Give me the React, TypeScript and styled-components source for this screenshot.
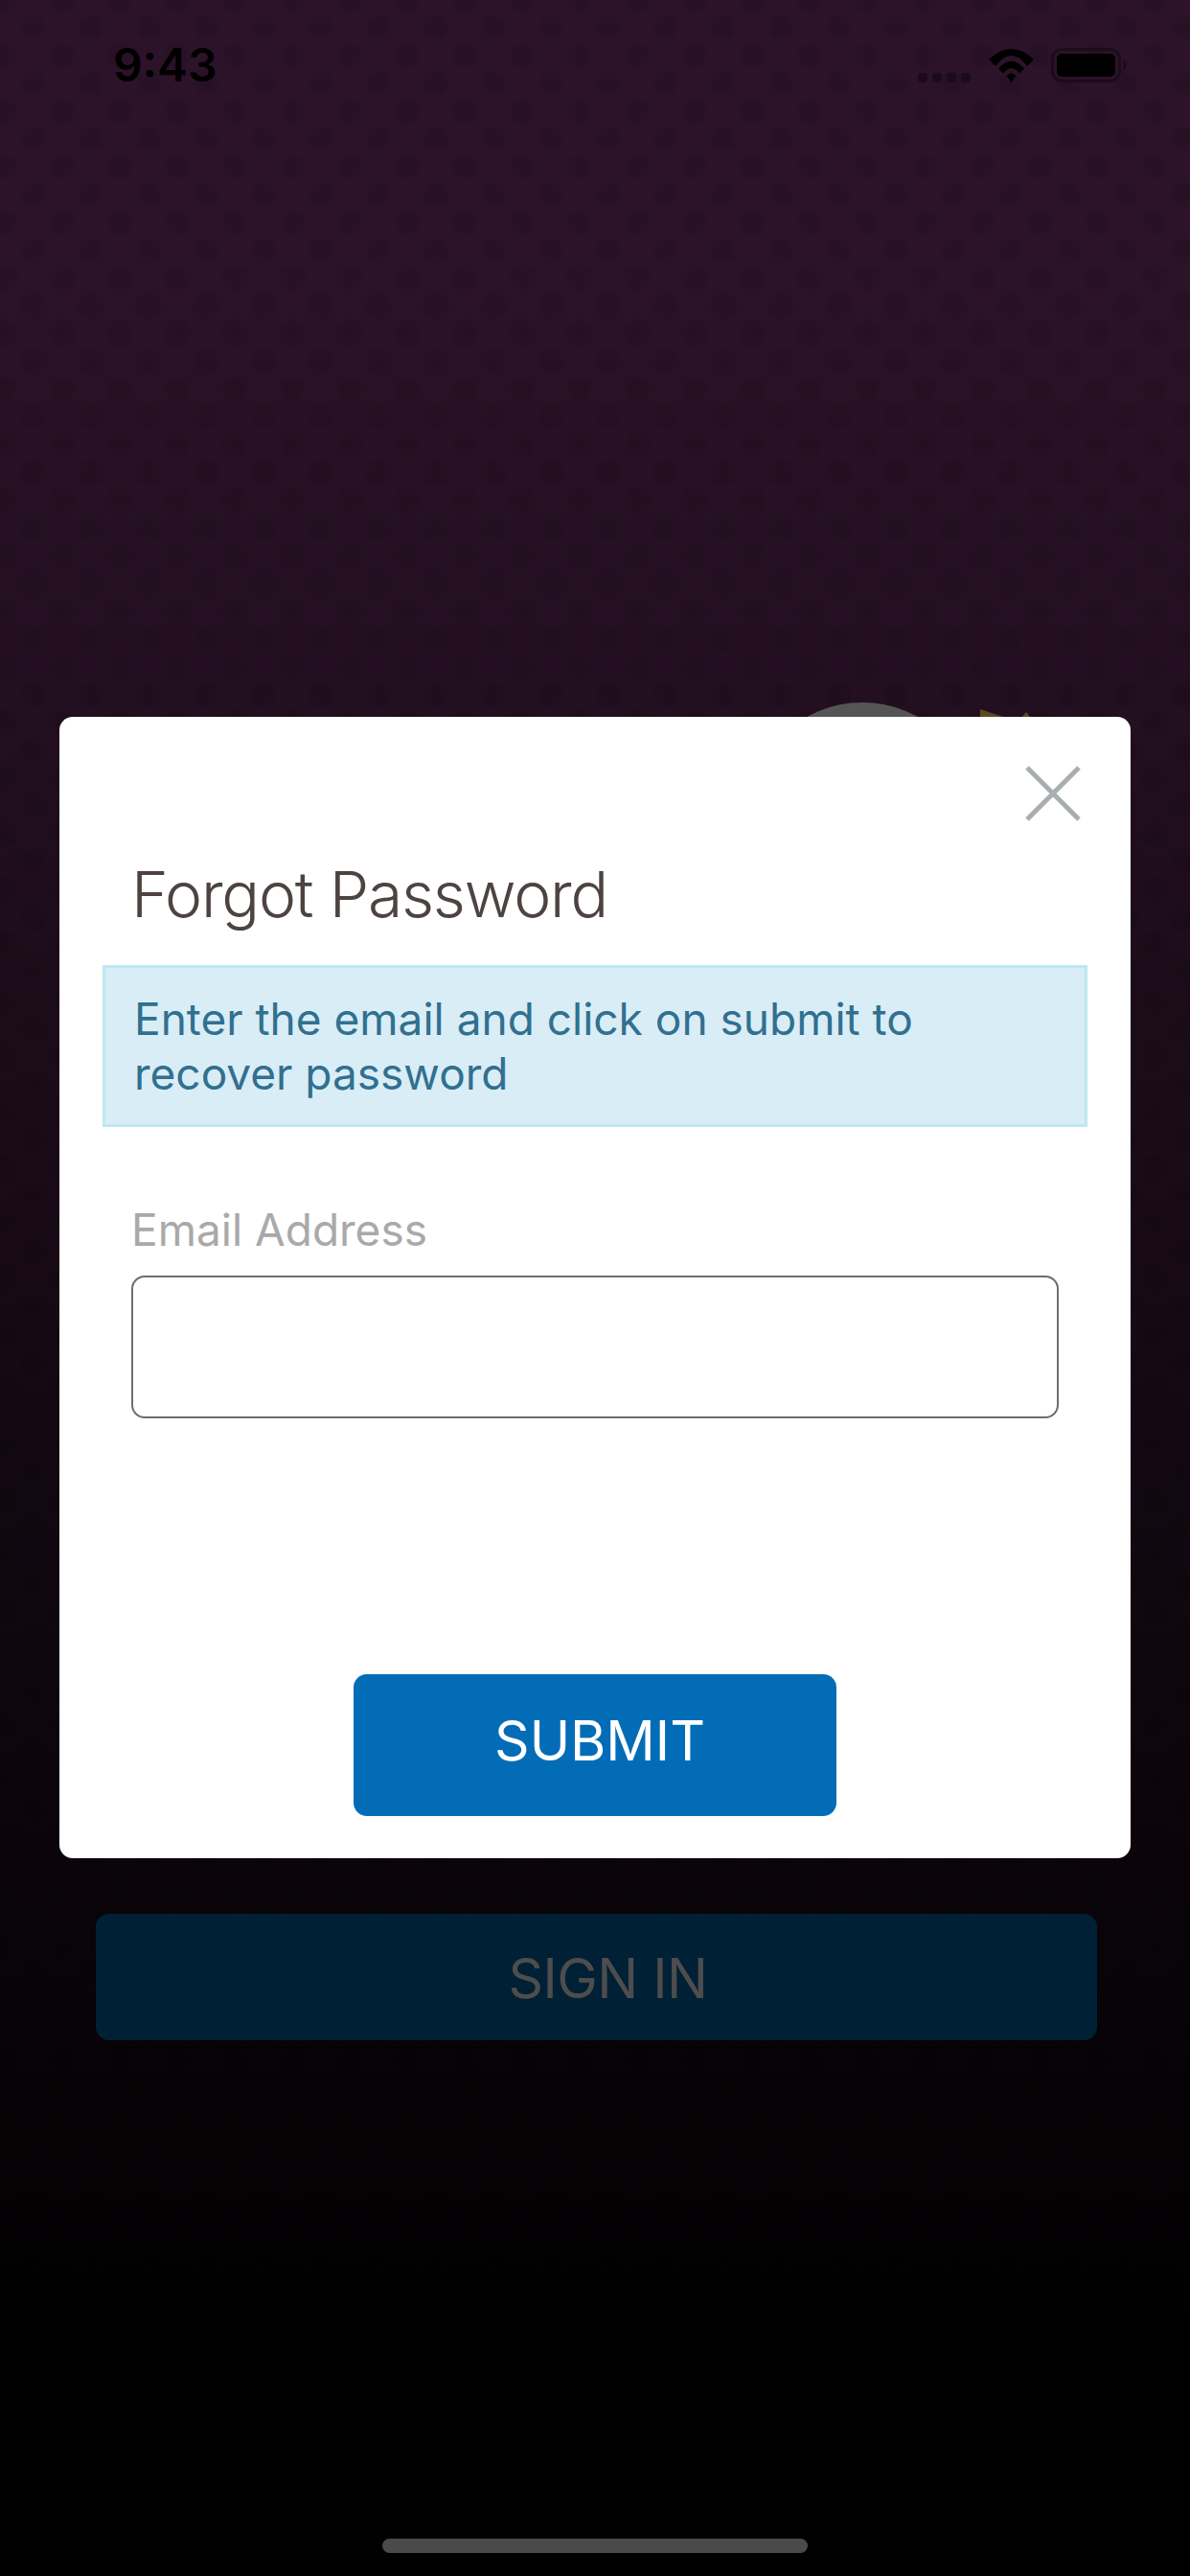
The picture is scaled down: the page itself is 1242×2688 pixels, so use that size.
import React from "react";
import styled, { createGlobalStyle } from "styled-components";

const GlobalStyle = createGlobalStyle`
  html, body {
    margin: 0;
    padding: 0;
    background: #000;
  }
`;

const fontStack = `Inter, "Liberation Sans", sans-serif`;

const Screen = styled.div`
  position: relative;
  display: flex;
  flex-direction: column;
  width: 1242px;
  height: 2688px;
  overflow: hidden;
  font-family: ${fontStack};
  background-color: #000;
  background-image:
    linear-gradient(180deg, rgba(0, 0, 0, 0) 9%, rgba(0, 0, 0, 1) 92%),
    radial-gradient(circle, rgba(0, 0, 0, 0.11) 0, rgba(0, 0, 0, 0.07) 11px, rgba(0, 0, 0, 0) 16px),
    radial-gradient(circle, rgba(0, 0, 0, 0.11) 0, rgba(0, 0, 0, 0.07) 11px, rgba(0, 0, 0, 0) 16px),
    linear-gradient(#2c1329, #2c1329);
  background-size: 100% 100%, 60px 58px, 60px 58px, 100% 100%;
  background-position: 0 0, 5px 0, 35px 29px, 0 0;
`;

const StatusBar = styled.div`
  display: flex;
  align-items: center;
  justify-content: space-between;
  height: 36px;
  padding: 50px 65px 0 118px;
`;

const Clock = styled.span`
  font-size: 48px;
  font-weight: 600;
  line-height: 36px;
  color: #000;
`;

const StatusIcons = styled.div`
  display: flex;
  align-items: flex-end;
  gap: 18px;
`;

const Logo = styled.svg`
  display: block;
  align-self: flex-end;
  margin: 647px 132px 0 0;
`;

const SignInButton = styled.div`
  display: flex;
  align-items: center;
  justify-content: center;
  width: 1045px;
  height: 132px;
  padding: 2px 0 0 24px;
  margin: 1224px 0 0 100px;
  box-sizing: border-box;
  font-size: 57px;
  letter-spacing: -0.5px;
  color: #4d4d4d;
  background: #002035;
  border-radius: 14px;
`;

const HomeIndicator = styled.div`
  align-self: center;
  width: 444px;
  height: 15px;
  margin-top: auto;
  margin-bottom: 24px;
  background: #4a4a4a;
  border-radius: 8px;
`;

const Modal = styled.div`
  position: absolute;
  top: 748px;
  left: 62px;
  display: flex;
  flex-direction: column;
  width: 1118px;
  height: 1191px;
  box-sizing: border-box;
  padding: 51px 0 44px;
  background: #fff;
  border-radius: 14px;
`;

const CloseRow = styled.div`
  display: flex;
  justify-content: flex-end;
  padding-right: 52px;
`;

const CloseIcon = styled.svg`
  display: block;
`;

const Title = styled.h2`
  margin: 36px 0 0 75px;
  font-size: 66px;
  font-weight: 300;
  line-height: 80px;
  letter-spacing: -1.2px;
  color: #4d4341;
`;

const Alert = styled.div`
  box-sizing: border-box;
  width: 1028px;
  height: 169px;
  padding: 25px 30px;
  margin: 34px 0 0 45px;
  font-size: 46px;
  line-height: 57px;
  color: #31708f;
  background: #d9edf7;
  border: 3px solid #bce8f1;
`;

const Field = styled.div`
  display: flex;
  flex-direction: column;
  padding: 0 75px;
  margin-top: 79px;
`;

const FieldLabel = styled.label`
  font-size: 46px;
  line-height: 56px;
  color: #a9a9a9;
`;

const TextInput = styled.input`
  box-sizing: border-box;
  width: 968px;
  height: 149px;
  margin-top: 20px;
  background: #fff;
  border: 2px solid #6e6e6e;
  border-radius: 14px;
  outline: none;
`;

const SubmitButton = styled.button`
  align-self: center;
  width: 504px;
  height: 148px;
  padding: 0 0 9px 10px;
  margin-top: auto;
  font-family: ${fontStack};
  font-size: 57px;
  color: #fff;
  background: #036cb7;
  border: 0;
  border-radius: 14px;
`;

const App = () => (
  <Screen>
    <GlobalStyle />
    <StatusBar>
      <Clock>9:43</Clock>
      <StatusIcons>
        <svg width="56" height="10" viewBox="0 0 56 10">
          {[0, 15, 30, 45].map((x) => (
            <rect key={x} x={x} y="0" width="10" height="10" rx="4" fill="#1c0b1a" />
          ))}
        </svg>
        <svg width="47" height="35" viewBox="0 0 47 35">
          <path d="M0 11 Q23.5 -11 47 11 L40 18 Q23.5 -4 7 18 Z" fill="#000" />
          <path d="M10 20.5 Q23.5 5 37 20.5 L32 25.5 Q23.5 15 15 25.5 Z" fill="#000" />
          <path d="M18.5 28 Q23.5 23 28.5 28 L23.5 35 Z" fill="#000" />
        </svg>
        <svg width="80" height="36" viewBox="0 0 80 36">
          <rect x="1.5" y="1.5" width="70" height="33" rx="10" fill="none" stroke="#1c0b1a" strokeWidth="3" />
          <rect x="6" y="6" width="61" height="24" rx="5" fill="#000" />
          <path d="M75 12 Q79 14 79 18 Q79 22 75 24 Z" fill="#1c0b1a" />
        </svg>
      </StatusIcons>
    </StatusBar>

    <Logo width="340" height="40" viewBox="0 0 340 40">
      <circle cx="130" cy="120" r="120" fill="#555" />
      <path d="M253 7 L280 16 L253 16 Z" fill="#5e4a1e" />
      <path d="M296 16 L301 10 L306 16 Z" fill="#5e4a1e" />
    </Logo>

    <SignInButton>SIGN IN</SignInButton>
    <HomeIndicator />

    <Modal>
      <CloseRow>
        <CloseIcon width="58" height="58" viewBox="0 0 58 58">
          <path d="M2 2 L56 56 M56 2 L2 56" stroke="#a9afb0" strokeWidth="5" fill="none" />
        </CloseIcon>
      </CloseRow>
      <Title>Forgot Password</Title>
      <Alert>Enter the email and click on submit to recover password</Alert>
      <Field>
        <FieldLabel>Email Address</FieldLabel>
        <TextInput type="email" />
      </Field>
      <SubmitButton>SUBMIT</SubmitButton>
    </Modal>
  </Screen>
);

export default App;
